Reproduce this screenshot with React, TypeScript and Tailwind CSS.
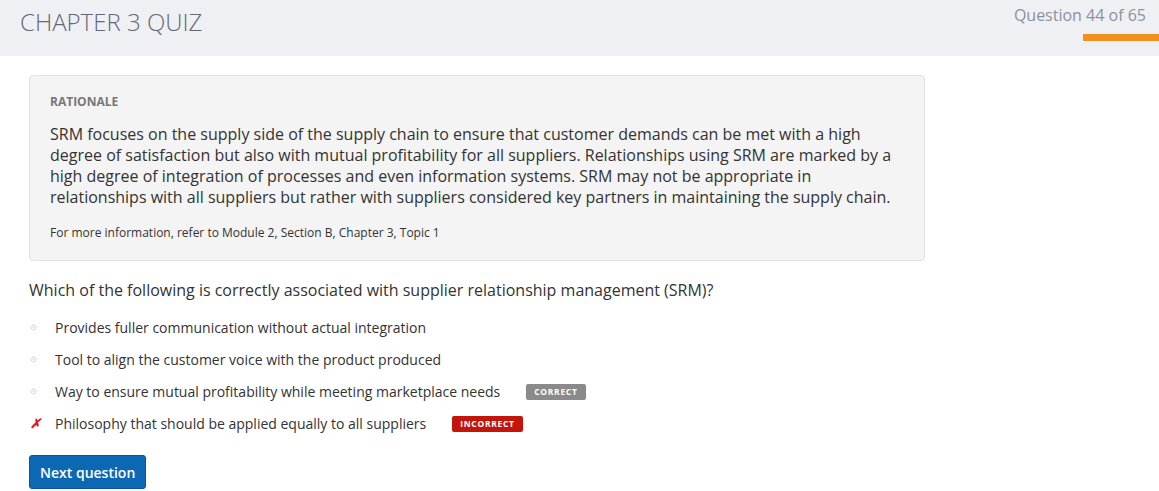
import React from "react";

const options = [
  { text: "Provides fuller communication without actual integration" },
  { text: "Tool to align the customer voice with the product produced" },
  { text: "Way to ensure mutual profitability while meeting marketplace needs", badge: "correct" },
  { text: "Philosophy that should be applied equally to all suppliers", badge: "incorrect", wrong: true },
];

function Bullet() {
  return (
    <svg width="7" height="7" viewBox="0 0 8 8" className="block">
      <path d="M4 0.5 L7.5 4 L4 7.5 L0.5 4 Z" fill="none" stroke="#cfcfcf" strokeWidth="1.1" />
      <rect x="3" y="3" width="2" height="2" fill="#dcdcdc" />
    </svg>
  );
}

export default function App() {
  return (
    <div
      className="min-h-screen bg-white text-[#333]"
      style={{ fontFamily: '"Open Sans", "Liberation Sans", sans-serif' }}
    >
      {/* header */}
      <header className="flex h-14 justify-between bg-[#eff0f4]">
        <h1 className="pl-5 pt-[6px] text-[24px] font-light leading-8 text-[#5f6a75]">CHAPTER 3 QUIZ</h1>
        <div className="flex flex-col items-end pt-[4px]">
          <div className="pr-[13px] text-[16px] leading-[22px] text-[#8b929b]">Question 44 of 65</div>
          <div className="mt-[8px] h-[7px] w-[76px] bg-[#f0901e]" />
        </div>
      </header>

      <main className="px-[29px] pt-[19px]">
        {/* rationale */}
        <section className="w-[896px] rounded border border-[#e2e2e2] bg-[#f4f4f4] px-5 pb-[19px] pt-[18px]">
          <div className="text-[12px] font-bold leading-4 text-[#777]">RATIONALE</div>
          <p className="mt-[14px] text-[16px] leading-[21px] text-[#333]">
            SRM focuses on the supply side of the supply chain to ensure that customer demands can be met with a high
            degree of satisfaction but also with mutual profitability for all suppliers. Relationships using SRM are
            marked by a high degree of integration of processes and even information systems. SRM may not be
            appropriate in relationships with all suppliers but rather with suppliers considered key partners in
            maintaining the supply chain.
          </p>
          <div className="mt-[17px] text-[12px] leading-4 text-[#333]">
            For more information, refer to Module 2, Section B, Chapter 3, Topic 1
          </div>
        </section>

        {/* question */}
        <div className="mt-[18px] text-[16px] leading-[22px] text-[#333]">
          Which of the following is correctly associated with supplier relationship management (SRM)?
        </div>

        <ul className="mt-[17px] flex flex-col gap-[13px]">
          {options.map((o) => (
            <li key={o.text} className="flex h-[19px] items-center text-[14px] leading-[19px] text-[#333]">
              <span className="flex w-[26px] shrink-0 items-center pl-[1px]">
                {o.wrong ? (
                  <span className="text-[13px] font-bold italic leading-none text-[#e8141b]">✗</span>
                ) : (
                  <Bullet />
                )}
              </span>
              <span>{o.text}</span>
              {o.badge === "correct" && (
                <span className="ml-[26px] rounded-[2px] bg-[#8a8a8a] px-[8px] text-[8.5px] font-bold leading-[16px] tracking-[0.08em] text-white">
                  CORRECT
                </span>
              )}
              {o.badge === "incorrect" && (
                <span className="ml-[26px] rounded-[2px] bg-[#c4150b] px-[8px] text-[8.5px] font-bold leading-[16px] tracking-[0.08em] text-white">
                  INCORRECT
                </span>
              )}
            </li>
          ))}
        </ul>

        <button className="mt-[22px] h-[34px] rounded-[3px] border border-[#0a5597] bg-[#0d68b4] px-[10px] text-[14px] font-semibold text-white">
          Next question
        </button>
      </main>
    </div>
  );
}
